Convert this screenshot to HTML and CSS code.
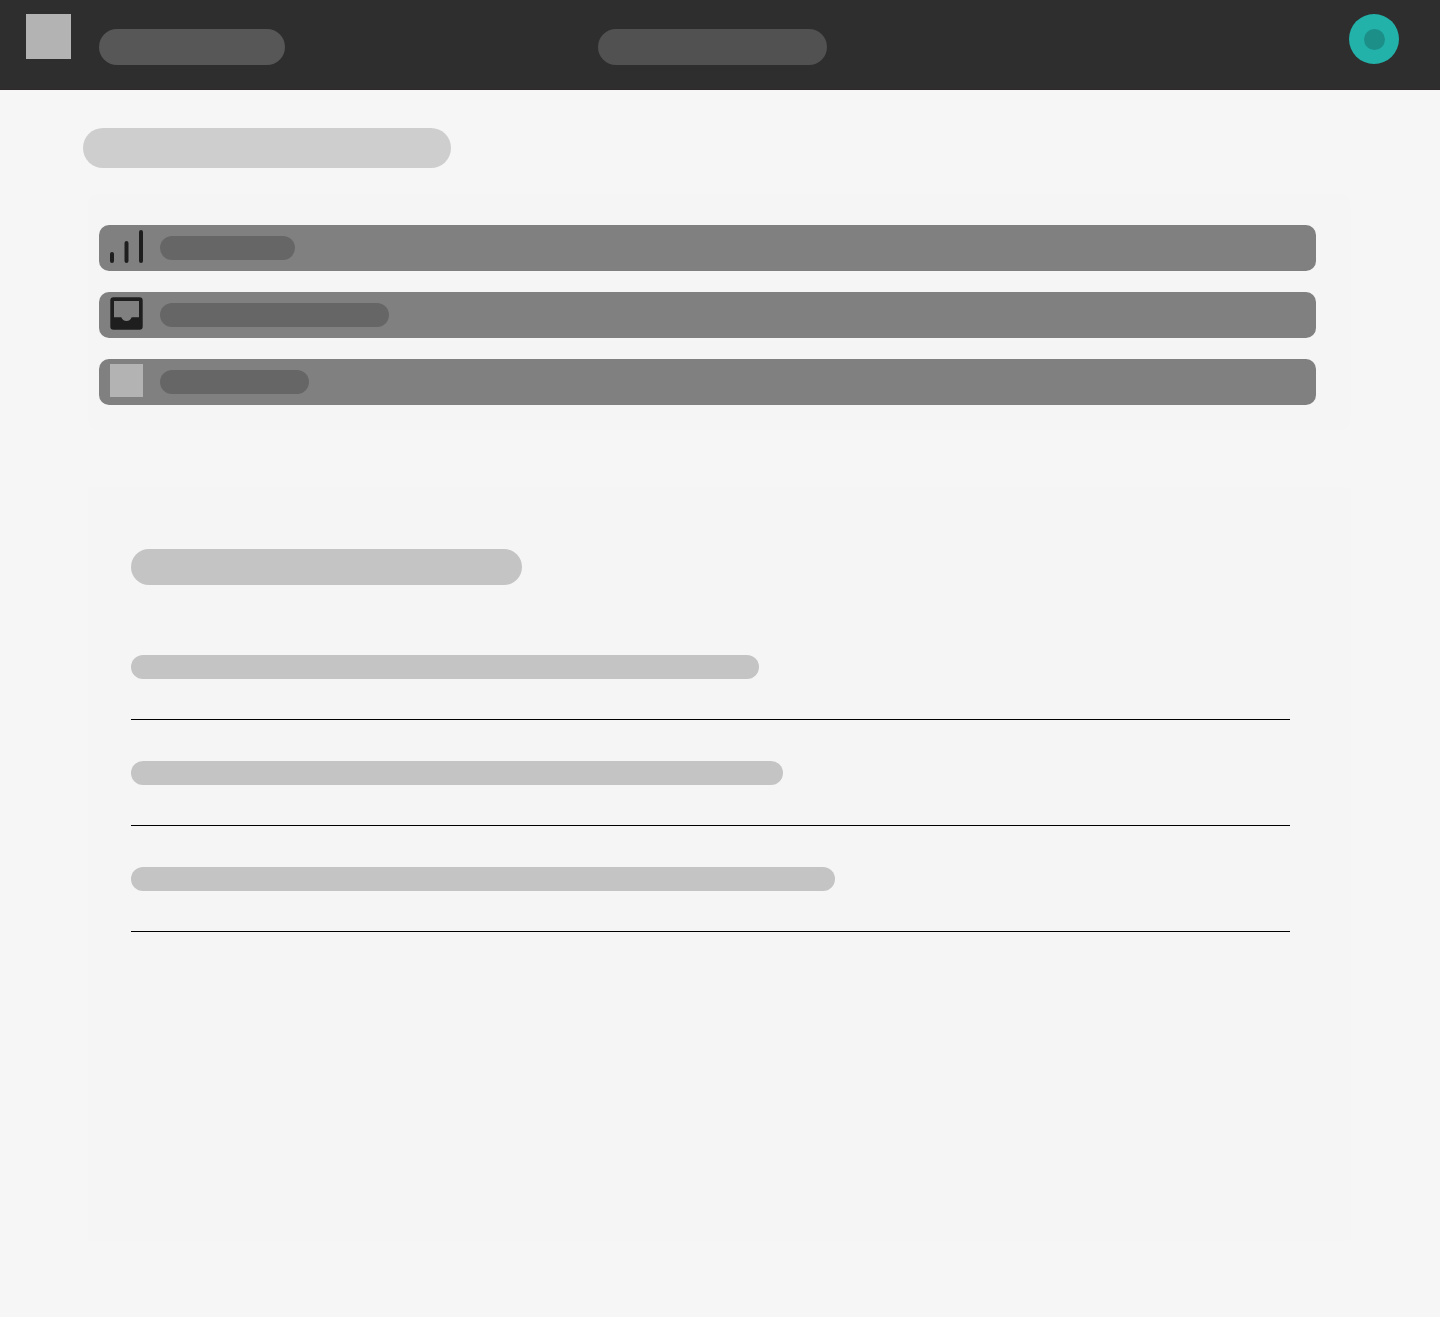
FILE: index.html
```html
<!DOCTYPE html>
<html lang="en">
<head>
<meta charset="utf-8">
<meta name="viewport" content="width=device-width, initial-scale=1">
<title>Dashboard</title>
<link rel="stylesheet" href="styles.css">
</head>
<body>
<header class="topbar">
  <div class="brand">
    <span class="logo"></span>
    <span class="bar bar-brand"></span>
  </div>
  <span class="bar bar-center"></span>
  <button class="avatar" type="button" aria-label="Account"><span class="avatar-dot"></span></button>
</header>
<main class="page">
  <div class="bar page-title"></div>
  <nav class="panel menu" aria-label="Sections">
    <a class="menu-item" href="#statistics" aria-label="Statistics">
      <svg class="icon" viewBox="0 0 33 33" aria-hidden="true">
        <path d="M2 24v7M16.5 13v18M31 2v29" fill="none" stroke="currentColor" stroke-width="4" stroke-linecap="round"/>
      </svg>
      <span class="bar label-short"></span>
    </a>
    <a class="menu-item" href="#inbox" aria-label="Inbox">
      <svg class="icon" viewBox="0 0 33 33" aria-hidden="true">
        <path fill="currentColor" fill-rule="evenodd" d="M3.500 .3h26a3.200 3.200 0 0 1 3.200 3.200v26a3.200 3.200 0 0 1-3.200 3.200h-26a3.200 3.200 0 0 1-3.200-3.200v-26a3.200 3.200 0 0 1 3.200-3.200zM4 4v16.300h7.300a5.500 5.500 0 0 0 10.400 0H29V4z"/>
      </svg>
      <span class="bar label-long"></span>
    </a>
    <a class="menu-item" href="#other" aria-label="Other">
      <span class="icon icon-image"></span>
      <span class="bar label-medium"></span>
    </a>
  </nav>
  <section class="panel details">
    <div class="bar details-title"></div>
    <ul class="details-list">
      <li class="details-row"><span class="bar line-first"></span></li>
      <li class="details-row"><span class="bar line-second"></span></li>
      <li class="details-row"><span class="bar line-third"></span></li>
    </ul>
  </section>
</main>
</body>
</html>
```
FILE: styles.css
```css
* {
  box-sizing: border-box;
}

body {
  margin: 0;
  background: #f6f6f6;
  font-family: "Liberation Sans", sans-serif;
}

.bar {
  display: block;
  height: 24px;
  max-width: 100%;
  border-radius: 20px;
  background: #c4c4c4;
}

.topbar {
  display: grid;
  grid-template-columns: 1fr auto 1fr;
  align-items: start;
  height: 90px;
  padding: 14px 41px 0 26px;
  border-bottom: 1px solid #2f292b;
  background: #2e2e2e;
}

.brand {
  display: flex;
  gap: 28px;
}

.logo {
  width: 45px;
  height: 45px;
  background: #b3b3b3;
}

.bar-brand,
.bar-center {
  height: 36px;
  margin-top: 15px;
}

.bar-brand {
  width: 186px;
  background: #575757;
}

.bar-center {
  width: 229px;
  background: #515151;
}

.avatar {
  display: grid;
  place-items: center;
  justify-self: end;
  width: 50px;
  height: 50px;
  padding: 0;
  border: 0;
  border-radius: 50%;
  background: #22b2aa;
}

.avatar-dot {
  width: 21px;
  height: 21px;
  border-radius: 50%;
  background: #1c8f88;
}

.page {
  padding: 38px 89px 76px 88px;
}

.page-title {
  width: 368px;
  height: 40px;
  margin: 0 0 26px -5px;
  background: #cecece;
}

.panel {
  background: #f5f5f5;
}

.menu {
  display: flex;
  flex-direction: column;
  gap: 21px;
  padding: 31px 35px 25px 11px;
  border-radius: 10px;
}

.menu-item {
  display: flex;
  align-items: center;
  gap: 17px;
  height: 46px;
  padding: 0 11px;
  border-radius: 10px;
  background: #808080;
  color: #1e1e1e;
}

.menu-item .bar {
  background: #666666;
}

.icon {
  align-self: start;
  flex: none;
  width: 33px;
  height: 33px;
  margin-top: 5px;
}

.icon-image {
  background: #b3b3b3;
}

.label-short {
  width: 135px;
}

.label-long {
  width: 229px;
}

.label-medium {
  width: 149px;
}

.details {
  min-height: 754px;
  margin-top: 57px;
  padding: 62px 61px 62px 43px;
}

.details-title {
  width: 391px;
  height: 36px;
}

.details-list {
  margin: 29px 0 0;
  padding: 0;
  list-style: none;
}

.details-row {
  padding: 41px 0 40px;
  border-bottom: 1px solid #000000;
}

.line-first {
  width: 628px;
}

.line-second {
  width: 652px;
}

.line-third {
  width: 704px;
}
```
